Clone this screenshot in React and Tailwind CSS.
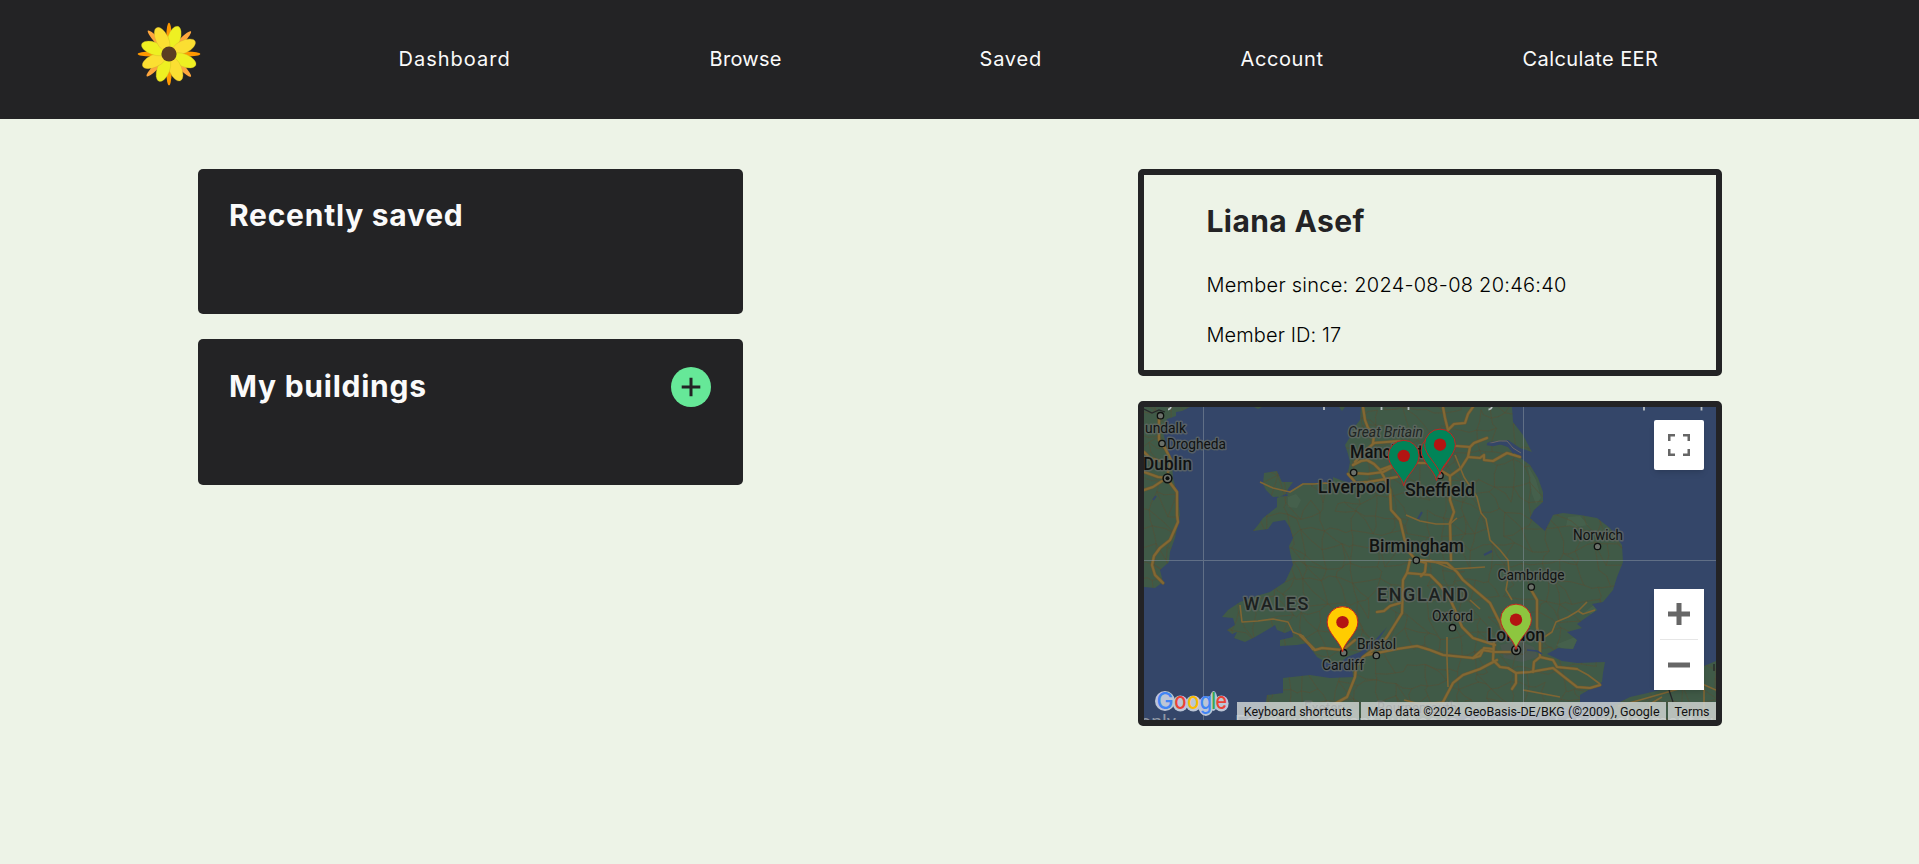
import React from "react";

const NAV = [
  { label: "Dashboard", cls: "w-[113px] tracking-[1px]" },
  { label: "Browse", cls: "w-[72px] tracking-[0.3px]" },
  { label: "Saved", cls: "w-[63px] tracking-[0.8px]" },
  { label: "Account", cls: "w-[84px] tracking-[0.6px]" },
  { label: "Calculate EER", cls: "w-[136px] tracking-[0.4px]" },
];

const PETALS = [
  [18, "#eef022"],
  [64, "#fbdf32"],
  [113, "#eef022"],
  [157, "#fbdf32"],
  [200, "#eef022"],
  [245, "#fbdf32"],
  [290, "#eef022"],
  [335, "#fbdf32"],
];

function Flower() {
  return (
    <svg viewBox="-32 -32 64 64" className="h-16 w-16">
      {[0, 90, 180, 270].map((a) => (
        <ellipse key={a} cx="0" cy="-18" rx="2.6" ry="13.3" fill="#ff9800" transform={`rotate(${a})`} />
      ))}
      {[44, 136, 225, 318].map((a) => (
        <ellipse key={a} cx="0" cy="-19" rx="2.7" ry="12.5" fill="#ffa63d" transform={`rotate(${a})`} />
      ))}
      {PETALS.map(([a, c]) => (
        <ellipse key={a} cx="0" cy="-16.3" rx="6.3" ry="12.8" fill={c} stroke="#c9a92c" strokeWidth="0.3" transform={`rotate(${a})`} />
      ))}
      <circle r="7.6" fill="#5b3d22" />
    </svg>
  );
}

const BRITAIN =
  "M1361 407L1360 420L1352 430L1350 437L1345 445L1348 454L1350 462L1348 472L1354 480L1366 482L1352 484L1343 481L1333 477L1333 482L1320 483L1303 483L1288 493L1277 498L1277 507L1263 518L1258 525L1253 531L1268 529L1273 522L1285 520L1290 528L1293 538L1289 546L1290 552L1293 565L1292 567L1285 582L1270 592L1253 597L1240 602L1228 610L1222 617L1233 618L1235 625L1227 630L1232 634L1237 632L1234 638L1245 642L1255 637L1267 630L1275 625L1277 630L1285 633L1292 630L1293 637L1280 640L1280 646L1297 645L1307 643L1317 657L1327 663L1340 663L1347 657L1360 652L1375 640L1387 627L1377 642L1363 655L1352 667L1353 677L1330 678L1310 675L1283 678L1283 693L1267 695L1265 707L1263 720L1440 720L1480 711L1540 714L1580 705L1580 695L1602 682L1603 673L1605 662L1577 663L1562 661L1547 654L1558 648L1573 649L1577 640L1567 632L1582 628L1577 624L1587 617L1597 610L1592 604L1603 602L1613 590L1617 577L1623 562L1622 545L1610 528L1597 518L1580 515L1563 513L1553 515L1545 531L1530 518L1534 510L1543 502L1543 492L1538 478L1530 465L1517 455L1508 447L1499 444L1487 444L1489 442L1508 440L1520 448L1532 452L1523 435L1513 422L1512 407Z";
const ANGLESEY = "M1264 473L1277 471L1282 482L1293 482L1286 492L1288 496L1273 497L1266 490L1263 484Z";
const IRELAND =
  "M1144 407L1190 407L1182 411L1176 412L1176 416L1167 419L1163 432L1168 452L1172 462L1173 478L1178 498L1180 515L1175 538L1170 552L1169 562L1160 570L1163 582L1155 588L1144 587Z";
const FRANCE = "M1616 704L1630 697L1652 692L1668 688L1690 682L1704 666L1716 661V720H1600Z";
const SCOTLAND_BITS = "M1254 407L1258 409L1262 407ZM1339 407L1342 411L1345 407Z";

const ROADS = [
  "1363,407 1365,420 1368,428 1374,434 1373,443 1400,441",
  "1353,465 1361,461 1367,460 1374,464 1380,470 1384,477 1390,490",
  "1353,473 1368,474 1383,472 1400,463 1430,463 1440,458",
  "1348,474 1356,483 1368,482 1380,480 1397,477",
  "1374,443 1362,454 1355,462",
  "1380,470 1396,464 1404,455",
  "1390,490 1391,510 1400,520 1404,537 1407,550 1416,560",
  "1443,407 1445,418 1448,430 1443,440 1444,447",
  "1448,430 1454,424 1465,423 1468,414 1473,407",
  "1444,446 1457,446 1470,447 1474,443 1487,438",
  "1470,447 1468,457 1461,468 1450,476 1440,470",
  "1468,457 1480,458 1484,455 1484,460 1493,461 1507,453 1520,457",
  "1450,476 1450,500 1454,512 1450,523 1451,560",
  "1410,560 1407,573 1403,580 1402,613 1387,637 1380,645 1363,657 1356,667 1355,677 1347,697 1320,712",
  "1407,573 1430,575 1440,585 1449,597 1455,610 1462,627 1473,638 1495,645",
  "1416,560 1426,563 1425,572 1421,576",
  "1420,560 1435,562 1447,563 1457,572 1463,580 1476,591 1490,603 1500,623 1503,632",
  "1377,612 1384,611 1390,606 1400,603",
  "1300,635 1315,650 1322,648 1343,650 1355,640",
  "1367,655 1397,649 1417,646 1430,650 1443,655 1473,658 1482,650 1495,652 1510,652",
  "1473,658 1480,656 1484,648 1493,649",
  "1443,702 1453,683 1463,675 1480,669 1497,660",
  "1494,640 1493,660 1500,667 1508,668 1516,673 1530,672 1553,668 1563,676 1577,687 1590,688 1600,685",
  "1533,672 1534,662 1540,657 1553,660 1557,667 1577,669",
  "1540,657 1540,643 1537,627 1537,600 1530,588",
  "1516,673 1516,683 1512,689",
  "1168,480 1177,492 1177,515 1178,522 1170,540 1160,548 1154,556 1152,565 1155,575 1163,583",
  "1159,417 1159,440 1165,448 1171,460 1168,472",
  "1144,472 1158,477 1168,478",
  "1144,490 1153,487 1162,481",
  "1144,452 1150,458 1160,461",
];

const MID_ROADS = [
  "1260,482 1273,488 1290,492 1303,484 1314,484 1325,483 1340,485 1360,482",
  "1455,455 1464,477 1477,497 1481,513 1486,519 1490,540 1500,550 1508,560 1509,572 1506,590 1512,600",
  "1240,605 1242,622 1258,621 1273,619 1288,622 1293,632 1303,636 1313,650",
  "1543,638 1552,632 1556,622 1568,617 1578,611 1583,614 1595,610",
  "1578,611 1587,602",
  "1577,669 1588,675 1600,684",
  "1447,637 1447,658 1448,687",
  "1430,560 1452,569 1470,568 1485,567",
  "1406,515 1420,521 1436,524 1450,524 1457,518",
  "1618,706 1640,700 1668,692 1700,683 1716,690",
  "1648,720 1650,704 1662,697",
  "1700,672 1704,690 1704,720",
  "1480,609 1470,600",
  "1523,690 1560,697",
  "1404,700 1420,704 1443,702",
];

// Seeded jittered lattice of country lanes, drawn clipped to the land.
function buildLanes() {
  let s = 7;
  const rnd = () => {
    s = (s * 16807) % 2147483647;
    return s / 2147483647;
  };
  const step = 17;
  const cols = 36;
  const rows = 21;
  const pts = [];
  for (let r = 0; r < rows; r++) {
    const row = [];
    for (let c = 0; c < cols; c++) row.push([1136 + c * step + (rnd() - 0.5) * 13, 396 + r * step + (rnd() - 0.5) * 13]);
    pts.push(row);
  }
  let d = "";
  const link = (a, b) => {
    const mx = (a[0] + b[0]) / 2 + (rnd() - 0.5) * 6;
    const my = (a[1] + b[1]) / 2 + (rnd() - 0.5) * 6;
    d += `M${a[0].toFixed(1)} ${a[1].toFixed(1)}L${mx.toFixed(1)} ${my.toFixed(1)}L${b[0].toFixed(1)} ${b[1].toFixed(1)}`;
  };
  for (let r = 0; r < rows - 1; r++)
    for (let c = 0; c < cols - 1; c++) {
      if (rnd() < 0.72) link(pts[r][c], pts[r][c + 1]);
      if (rnd() < 0.72) link(pts[r][c], pts[r + 1][c]);
      if (rnd() < 0.3) link(pts[r][c], pts[r + 1][c + 1]);
    }
  return d;
}
const LANES = buildLanes();

const LABELS = [
  ["undalk", 1145, 433, 14.5, 41, 400],
  ["Drogheda", 1167, 448.5, 14.5, 59, 400],
  ["Dublin", 1143, 469.5, 18, 49, 500],
  ["Manchester", 1350, 458, 18.3, 88, 500],
  ["Liverpool", 1318, 493, 18.3, 72, 500],
  ["Sheffield", 1405, 495.5, 18.3, 70, 500],
  ["Birmingham", 1369, 552, 18.3, 95, 500],
  ["Norwich", 1573, 539.5, 14.5, 50, 400],
  ["Cambridge", 1497.5, 580, 14.5, 67, 400],
  ["Oxford", 1432, 621, 14.5, 41, 400],
  ["Bristol", 1357, 648.5, 14.5, 39, 400],
  ["Cardiff", 1322, 670, 14.5, 42, 400],
  ["London", 1487, 641, 18.3, 58, 500],
  ["Exeter", 1304, 713, 14.5, 38, 400],
  ["Bournemouth", 1377, 713, 14.5, 80, 400],
];

const TOWNS = [
  [1160.5, 415.7],
  [1162, 443.5],
  [1353.7, 472.6],
  [1440, 475.5],
  [1416.3, 560.3],
  [1597.5, 546.5],
  [1531.3, 587],
  [1452.5, 627.7],
  [1376.3, 655.5],
  [1343.7, 652.7],
];

function Pin({ x, y, fill }) {
  return (
    <g transform={`translate(${x} ${y})`}>
      <path d="M0 0C-1.6-10-15.4-19-15.4-30A15.4 15.4 0 1 1 15.4-30C15.4-19 1.6-10 0 0Z" fill={fill} stroke="#c5221f" strokeWidth="1" />
      <circle cy="-29.8" r="6.2" fill="#b31412" />
    </g>
  );
}

function MapCanvas() {
  return (
    <svg viewBox="1144 407 572 313" className="absolute inset-0 h-full w-full" fontFamily="Roboto, sans-serif">
      <defs>
        <clipPath id="land">
          <path d={BRITAIN + ANGLESEY + IRELAND + FRANCE} />
        </clipPath>
      </defs>
      <rect x="1144" y="407" width="572" height="313" fill="#344669" />
      <path d={BRITAIN + ANGLESEY + IRELAND + FRANCE + SCOTLAND_BITS} fill="#405a47" />
      <g clipPath="url(#land)">
        <path d="M1288 497l8-3 5 6-4 8-9-1zM1568 517l12-1 8 9-12 2-10-1zM1528 466l8 14 5 18-5 6-4-10zM1585 612l10-8 8 0-6 12zM1555 645l20-8 6 9-10 6z" fill="#4a6450" opacity="0.6" />
        <path d="M1500 645l20-4 14 6 4 10-16 5-18-4z" fill="#4b5650" opacity="0.8" />
        <path d={LANES} fill="none" stroke="#574f35" strokeWidth="0.8" opacity="0.75" />
        <path d="M1418 519l4-7M1484 555l8-4M1153 500l3-4" stroke="#344669" strokeWidth="2" />
      </g>
      <g fill="none" stroke="#6b5931" strokeWidth="3.2" strokeLinejoin="round" strokeLinecap="round">
        {ROADS.map((p) => (
          <polyline key={p} points={p} />
        ))}
      </g>
      <g fill="none" stroke="#836833" strokeWidth="2.1" strokeLinejoin="round" strokeLinecap="round">
        {ROADS.map((p) => (
          <polyline key={p} points={p} />
        ))}
      </g>
      <g fill="none" stroke="#7f6533" strokeWidth="1.6" strokeLinejoin="round">
        {MID_ROADS.map((p) => (
          <polyline key={p} points={p} />
        ))}
      </g>
      <path d="M1144 409l8 4 7-3 6 2M1669 690l4 12M1714 664v7" fill="none" stroke="#26282a" strokeWidth="1.3" />
      <path d="M1487 444l12-3 8 0 6 7 8 5" fill="none" stroke="#6d6663" strokeWidth="1" />
      <path d="M1487 444l6 1 8-2 8 3 5 7" fill="none" stroke="#344669" strokeWidth="2.4" />
      <path d="M1527 650l10 1 5 3" fill="none" stroke="#344669" strokeWidth="1.6" />
      <path d="M1324 407v3M1381.500 407v3M1408.500 407v3M1644 407v3.500M1701.500 407v3.500M1168 409.500q2 0 3-2.500M1488.500 409.500q2.500 0 3.500-2.500" fill="none" stroke="#b9bfc2" strokeWidth="1.8" />
      <path d="M1203.500 407v313M1523.500 407v313M1144 560.500h572" stroke="#8d99a4" strokeWidth="1" opacity="0.5" />
      {TOWNS.map(([x, y]) => (
        <circle key={x} cx={x} cy={y} r="3.2" fill="#6b7069" stroke="#0d0f0e" strokeWidth="1.3" />
      ))}
      {[
        [1167.5, 478.3],
        [1516.2, 650],
      ].map(([x, y]) => (
        <g key={x}>
          <circle cx={x} cy={y} r="4.4" fill="#6b7069" stroke="#0d0f0e" strokeWidth="1.5" />
          <circle cx={x} cy={y} r="2" fill="#0d0f0e" />
        </g>
      ))}
      <g fill="#101211" stroke="#626965" strokeWidth="3" strokeOpacity="0.75" strokeLinejoin="round" paintOrder="stroke">
        {LABELS.map(([t, x, y, size, w, weight]) => (
          <text key={t} x={x} y={y} fontSize={size} fontWeight={weight} textLength={w} lengthAdjust="spacingAndGlyphs">
            {t}
          </text>
        ))}
        <text x="1348" y="436.500" fontSize="14.500" fontStyle="italic" textLength="75" lengthAdjust="spacingAndGlyphs" fill="#1f2523">Great Britain</text>
        <text x="1243.500" y="609.700" fontSize="18" fontWeight="500" textLength="65" fill="#1c211f">WALES</text>
        <text x="1377" y="601.200" fontSize="18" fontWeight="500" textLength="91" fill="#1c211f">ENGLAND</text>
      </g>
      <Pin x={1403.7} y={485.7} fill="#018458" />
      <Pin x={1436.5} y={480.5} fill="#018458" />
      <Pin x={1440} y={474.5} fill="#018458" />
      <Pin x={1342.5} y={652} fill="#ffcc00" />
      <Pin x={1516} y={649.5} fill="#8dc63f" />
      <g fontFamily="Inter, sans-serif" fontSize="23" fontWeight="500" strokeLinejoin="round">
        {["#bcc6d6", "none"].map((halo) =>
          [
            ["G", 1156.5, 17, "#4285f4"],
            ["o", 1174.3, 12.2, "#ea4335"],
            ["o", 1187.2, 12.2, "#fbbc04"],
            ["g", 1199.8, 12.2, "#4285f4"],
            ["l", 1211.2, 4.8, "#34a853"],
            ["e", 1215.6, 11.5, "#ea4335"],
          ].map(([ch, x, w, fill]) =>
            halo === "none" ? (
              <text key={halo + x} x={x} y="709.300" fill={fill} textLength={w} lengthAdjust="spacingAndGlyphs">
                {ch}
              </text>
            ) : (
              <ellipse key={halo + x} cx={x + w / 2} cy={ch === "G" ? 701 : ch === "l" ? 701 : ch === "g" ? 706 : 703.5} rx={w / 2 + 1.5} ry={ch === "G" || ch === "l" ? 10 : ch === "g" ? 10 : 8} fill={halo} />
            ),
          ),
        )}
      </g>
      <g fill="#b4babd" fontSize="19" opacity="0.7">
        <text x="1235" y="728" textLength="262" lengthAdjust="spacingAndGlyphs">For development purposes only</text>
        <text x="1554" y="728" textLength="262" lengthAdjust="spacingAndGlyphs">For development purposes only</text>
        <text x="1140" y="728" textLength="36" lengthAdjust="spacingAndGlyphs">only</text>
      </g>
    </svg>
  );
}

function MapControls() {
  return (
    <>
      <button aria-label="Toggle fullscreen view" className="absolute right-3 top-[13px] flex h-[50px] w-[50px] items-center justify-center rounded-xs bg-white shadow-md">
        <svg viewBox="0 0 22 22" className="h-[22px] w-[22px]" fill="none" stroke="#666" strokeWidth="2.500">
          <path d="M1.250 7V1.250H7M15 1.250h5.750V7M20.750 15v5.750H15M7 20.750H1.250V15" />
        </svg>
      </button>
      <div className="absolute bottom-[30px] right-3 flex h-[101px] w-[50px] flex-col items-center bg-white shadow-md">
        <button aria-label="Zoom in" className="flex h-[50px] w-full items-center justify-center">
          <svg viewBox="0 0 22 22" className="h-[22px] w-[22px]" stroke="#666" strokeWidth="5">
            <path d="M0 11h22M11 0v22" />
          </svg>
        </button>
        <div className="h-px w-[38px] bg-[#e6e6e6]" />
        <button aria-label="Zoom out" className="flex h-[50px] w-full items-center justify-center">
          <svg viewBox="0 0 22 22" className="h-[22px] w-[22px]" stroke="#666" strokeWidth="5">
            <path d="M0 11h22" />
          </svg>
        </button>
      </div>
      <div className="absolute bottom-0 right-0 flex h-[18px] w-[479px] gap-[2px] whitespace-nowrap font-[Roboto,sans-serif] text-[12.5px] leading-[19px] text-[#111]">
        <span className="w-[122px] bg-[#d6dad8]/80 text-center">Keyboard shortcuts</span>
        <span className="flex-1 bg-[#d6dad8]/80 text-center">Map data ©2024 GeoBasis-DE/BKG (©2009), Google</span>
        <span className="w-[48px] bg-[#d6dad8]/80 text-center">Terms</span>
      </div>
    </>
  );
}

export default function App() {
  return (
    <div className="min-h-screen bg-[#edf3e7] font-[Inter,sans-serif]">
      <header className="flex h-[119px] bg-[#232325] pl-[137px]">
        <div className="mt-[22px] w-16">
          <Flower />
        </div>
        <nav className="ml-[197.5px] flex items-center gap-[198px] whitespace-nowrap pb-0.5 text-xl text-[#fafafa]">
          {NAV.map((n) => (
            <a key={n.label} className={n.cls}>
              {n.label}
            </a>
          ))}
        </nav>
      </header>
      <main className="flex items-start justify-between pl-[198px] pr-[197px] pt-[50px]">
        <div className="flex w-[545px] flex-col gap-[25px]">
          <section className="h-[145px] rounded-[5px] bg-[#232325] pl-[31px] pr-8 pt-7">
            <div className="flex h-[37px] items-center">
              <h2 className="text-[30px] font-bold tracking-[0.75px] text-[#fafafa]">Recently saved</h2>
            </div>
          </section>
          <section className="h-[146px] rounded-[5px] bg-[#232325] pl-[31px] pr-8 pt-7">
            <div className="flex h-10 items-center justify-between">
              <h2 className="pb-0.5 text-[30px] font-bold tracking-[0.75px] text-[#fafafa]">My buildings</h2>
              <button aria-label="Add building" className="flex h-10 w-10 items-center justify-center rounded-full bg-[#66e898]">
                <svg viewBox="0 0 20 20" className="h-5 w-5" stroke="#232325" strokeWidth="3">
                  <path d="M.700 10h18.600M10 .700v18.600" />
                </svg>
              </button>
            </div>
          </section>
        </div>
        <div className="flex w-[584px] flex-col gap-[25px]">
          <section className="flex h-[207px] flex-col rounded-[5px] border-[6px] border-[#232325] pl-[62.5px] pt-[26px] text-black">
            <h2 className="text-[30px] font-bold leading-10 tracking-[0.4px] text-[#232325]">Liana Asef</h2>
            <p className="mt-[29px] text-xl font-light leading-[30px] tracking-[0.25px]">Member since: 2024-08-08 20:46:40</p>
            <p className="mt-5 text-xl font-light leading-[30px] tracking-[0.1px]">Member ID: 17</p>
          </section>
          <section className="relative h-[325px] rounded-[5px] border-[6px] border-[#232325]">
            <MapCanvas />
            <MapControls />
          </section>
        </div>
      </main>
    </div>
  );
}
